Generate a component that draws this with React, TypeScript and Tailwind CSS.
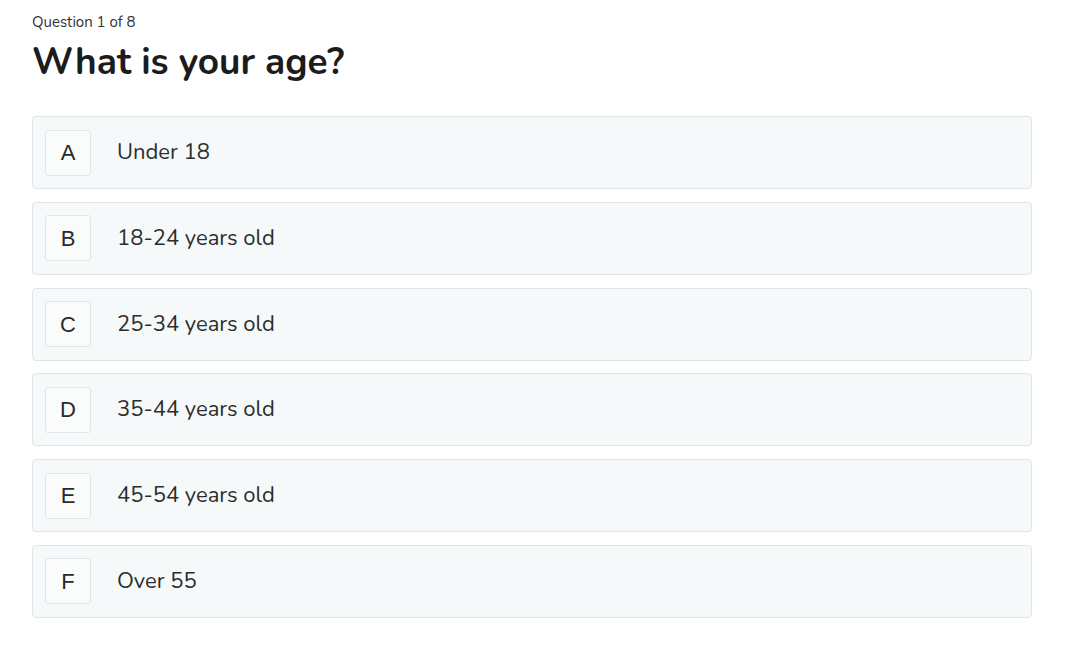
import React from "react";

const options = [
  { key: "A", label: "Under 18" },
  { key: "B", label: "18-24 years old" },
  { key: "C", label: "25-34 years old" },
  { key: "D", label: "35-44 years old" },
  { key: "E", label: "45-54 years old" },
  { key: "F", label: "Over 55" },
];

export default function App() {
  return (
    <div
      className="min-h-[645px] w-[1072px] bg-white px-8 pt-3 text-[#222]"
      style={{ fontFamily: "Nunito, Lato, 'Noto Sans', sans-serif" }}
    >
      <div className="text-[15px] leading-5 text-[#333]">Question 1 of 8</div>
      <h1 className="mt-[8px] text-[37px] font-bold leading-[44px] text-[#1c1c1c]">
        What is your age?
      </h1>
      <div className="mt-[32px] flex w-[1000px] flex-col gap-[12.8px]">
        {options.map((o) => (
          <div
            key={o.key}
            className="flex h-[73px] items-center rounded-[4px] border border-[#dfe4e6] bg-[#f5f9fa] px-3"
          >
            <div
              className="flex h-[46px] w-[46px] items-center justify-center rounded-[3px] border border-[#e2e6e8] bg-[#fafcfc] text-[22px] font-normal text-[#2a2a2a]"
              style={{ fontFamily: "'Liberation Sans', Arial, sans-serif" }}
            >
              {o.key}
            </div>
            <div className="ml-[26px] text-[22px] text-[#2d2d2d]">{o.label}</div>
          </div>
        ))}
      </div>
    </div>
  );
}
